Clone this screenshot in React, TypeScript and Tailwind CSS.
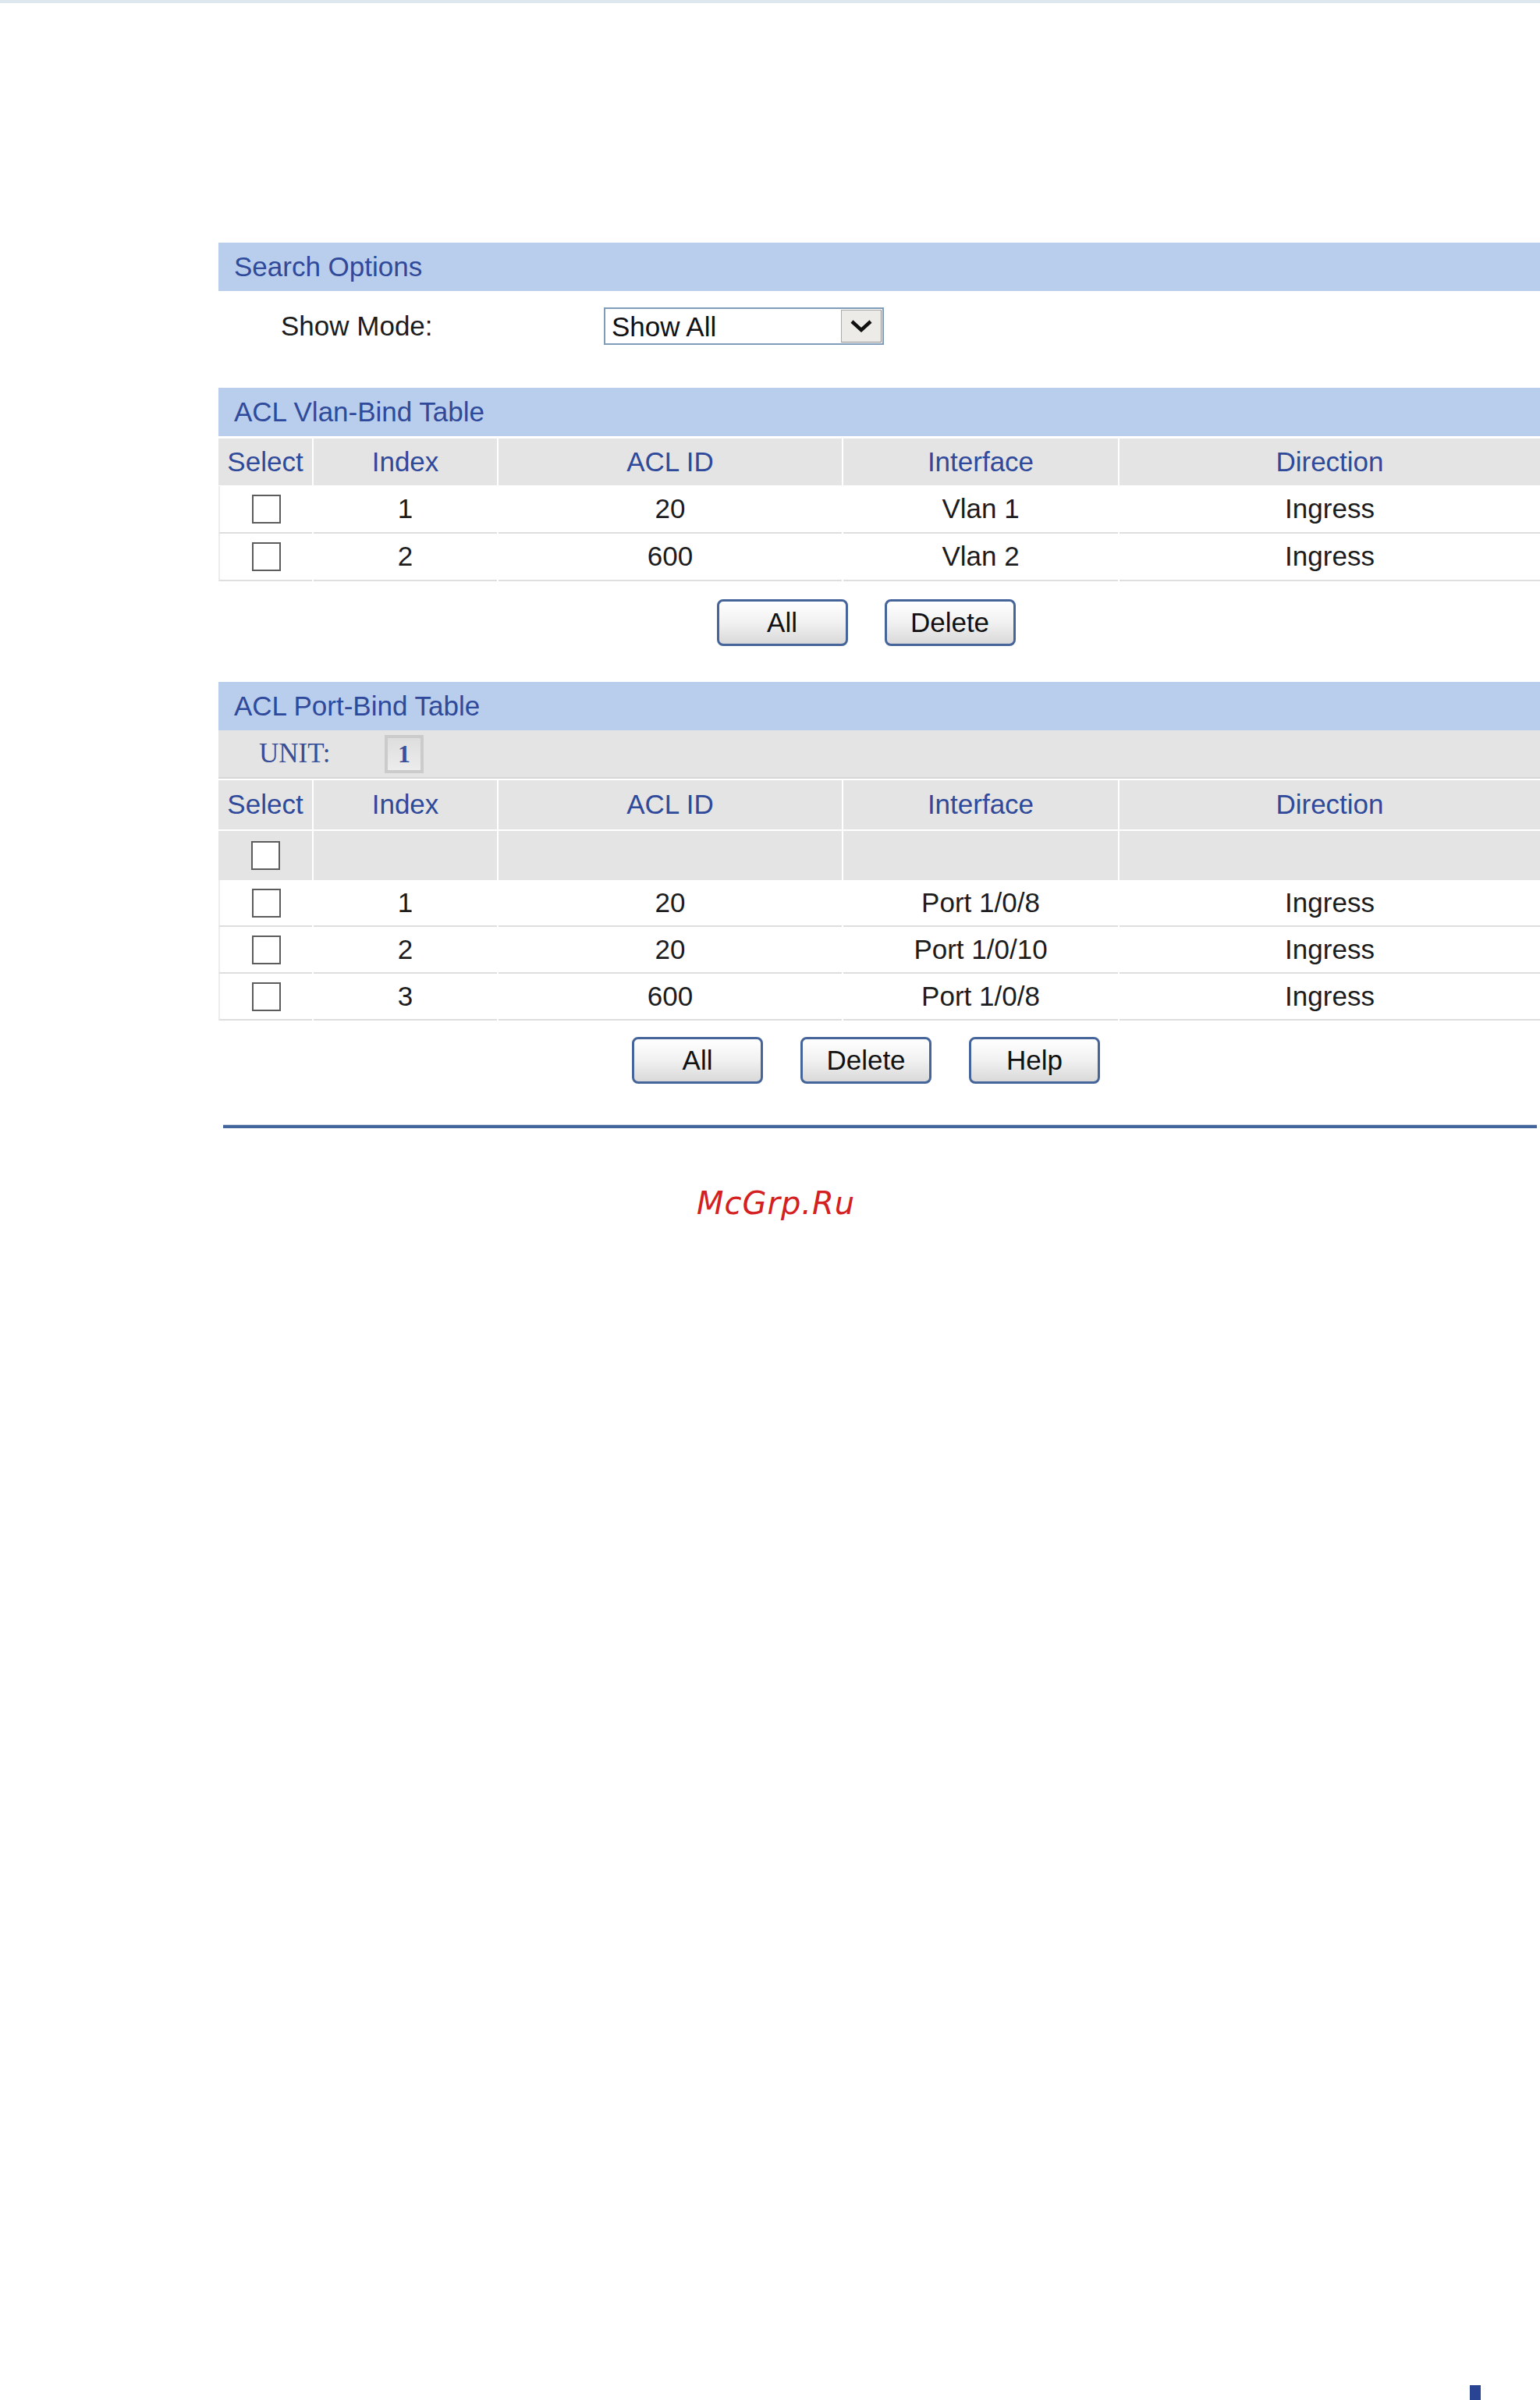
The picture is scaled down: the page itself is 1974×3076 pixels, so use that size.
import type { ReactNode } from "react";

const vlanRows = [
  { index: "1", aclId: "20", iface: "Vlan 1", direction: "Ingress" },
  { index: "2", aclId: "600", iface: "Vlan 2", direction: "Ingress" },
];

const portRows = [
  { index: "1", aclId: "20", iface: "Port 1/0/8", direction: "Ingress" },
  { index: "2", aclId: "20", iface: "Port 1/0/10", direction: "Ingress" },
  { index: "3", aclId: "600", iface: "Port 1/0/8", direction: "Ingress" },
];

const cols = "grid grid-cols-[120px_235px_440px_352px_1fr] gap-x-[2px]";

function SectionTitle({ children }: { children: ReactNode }) {
  return (
    <div className="flex h-[62px] items-center bg-[#b9cdec] pl-[20px] text-[35px] text-[#2f4a9a]">
      {children}
    </div>
  );
}

function Checkbox() {
  return <span className="block h-[37px] w-[37px] border-2 border-[#5c5c5c] bg-white" />;
}

function HeaderRow({ height }: { height: string }) {
  const labels = ["Select", "Index", "ACL ID", "Interface", "Direction"];
  return (
    <div className={`${cols} ${height}`}>
      {labels.map((label) => (
        <div
          key={label}
          className="flex items-center justify-center bg-[#e4e4e4] text-[35px] text-[#2f4a9a]"
        >
          {label}
        </div>
      ))}
    </div>
  );
}

function DataRow({
  row,
  height,
}: {
  row: { index: string; aclId: string; iface: string; direction: string };
  height: string;
}) {
  const cell = "flex items-center justify-center border-b-2 border-[#dedede] text-[35px] text-[#1c1c1c]";
  return (
    <div className={`${cols} ${height}`}>
      <div className={`${cell} border-l-2 border-l-[#ececec]`}>
        <Checkbox />
      </div>
      <div className={cell}>{row.index}</div>
      <div className={cell}>{row.aclId}</div>
      <div className={cell}>{row.iface}</div>
      <div className={cell}>{row.direction}</div>
    </div>
  );
}

function Button({ children }: { children: ReactNode }) {
  return (
    <button
      type="button"
      className="flex h-[60px] w-[168px] items-center justify-center rounded-[8px] border-[3px] border-[#45649a] bg-gradient-to-b from-white via-[#f1f1f1] to-[#d9d9d9] text-[35px] text-[#111]"
    >
      {children}
    </button>
  );
}

export default function App() {
  return (
    <div
      className="relative h-[3076px] w-[1974px] overflow-hidden bg-white"
      style={{ fontFamily: '"Liberation Sans", Arial, sans-serif' }}
    >
      <div className="h-[4px] bg-[#dce7ee]" />

      <div className="pl-[280px] pt-[307px]">
        {/* search options */}
        <SectionTitle>Search Options</SectionTitle>
        <div className="flex h-[124px] items-start pt-[21px]">
          <div className="flex h-[48px] w-[494px] items-center pl-[80px] text-[35px] text-[#1c1c1c]">
            Show Mode:
          </div>
          <div className="flex h-[48px] w-[359px] items-center border-2 border-[#7f9db9] bg-white">
            <span className="flex-1 pl-[8px] text-[35px] leading-none text-[#111]">Show All</span>
            <span className="mr-[1px] flex h-[42px] w-[52px] items-center justify-center border border-[#a9a9a9] border-b-[#8a8a8a] border-r-[#8a8a8a] bg-[#ecebe8]">
              <svg width="30" height="20" viewBox="0 0 30 20" fill="none">
                <path d="M3 4 L15 15 L27 4" stroke="#111" strokeWidth="4.5" />
              </svg>
            </span>
          </div>
        </div>

        {/* vlan bind table */}
        <SectionTitle>ACL Vlan-Bind Table</SectionTitle>
        <div className="mt-[3px]">
          <HeaderRow height="h-[60px]" />
        </div>
        <div className="mt-[1px]">
          {vlanRows.map((row) => (
            <DataRow key={row.index} row={row} height="h-[61px]" />
          ))}
        </div>
        <div className="flex justify-center gap-[47px] pr-[34px] pt-[23px]">
          <Button>All</Button>
          <Button>Delete</Button>
        </div>

        {/* port bind table */}
        <div className="mt-[46px]">
          <SectionTitle>ACL Port-Bind Table</SectionTitle>
        </div>
        <div
          className="flex h-[62px] items-center border-b-2 border-[#d6d6d6] bg-[#e4e4e4] pl-[52px] text-[35px] text-[#3a4f96]"
          style={{ fontFamily: '"Liberation Serif", "Times New Roman", serif' }}
        >
          <span className="w-[161px]">UNIT:</span>
          <span className="flex h-[49px] w-[50px] items-center justify-center border-[4px] border-[#cbcbcb] bg-gradient-to-b from-[#dedede] to-[#ececec] text-[32px] font-bold leading-none text-[#3a4f96]">
            1
          </span>
        </div>
        <div className="mt-[2px]">
          <HeaderRow height="h-[63px]" />
        </div>
        <div className={`${cols} mt-[2px] h-[63px]`}>
          <div className="flex items-center justify-center bg-[#e4e4e4]">
            <Checkbox />
          </div>
          <div className="bg-[#e4e4e4]" />
          <div className="bg-[#e4e4e4]" />
          <div className="bg-[#e4e4e4]" />
          <div className="bg-[#e4e4e4]" />
        </div>
        <div>
          {portRows.map((row) => (
            <DataRow key={row.index} row={row} height="h-[60px]" />
          ))}
        </div>
        <div className="flex justify-center gap-[48px] pr-[34px] pt-[21px]">
          <Button>All</Button>
          <Button>Delete</Button>
          <Button>Help</Button>
        </div>

        <div className="ml-[6px] mr-[4px] mt-[52px] h-[5px] border-t border-[#c9d4e4] bg-[#42659b]" />

        <div className="flex pl-[613px] pt-[76px]">
          <span
            className="text-[40px] italic leading-none tracking-[1px] text-[#d42020]"
            style={{ fontFamily: '"DejaVu Sans", sans-serif' }}
          >
            McGrp.Ru
          </span>
        </div>
      </div>

      <div className="absolute bottom-0 left-[1884px] h-[19px] w-[14px] bg-[#2a4494]" />
    </div>
  );
}
